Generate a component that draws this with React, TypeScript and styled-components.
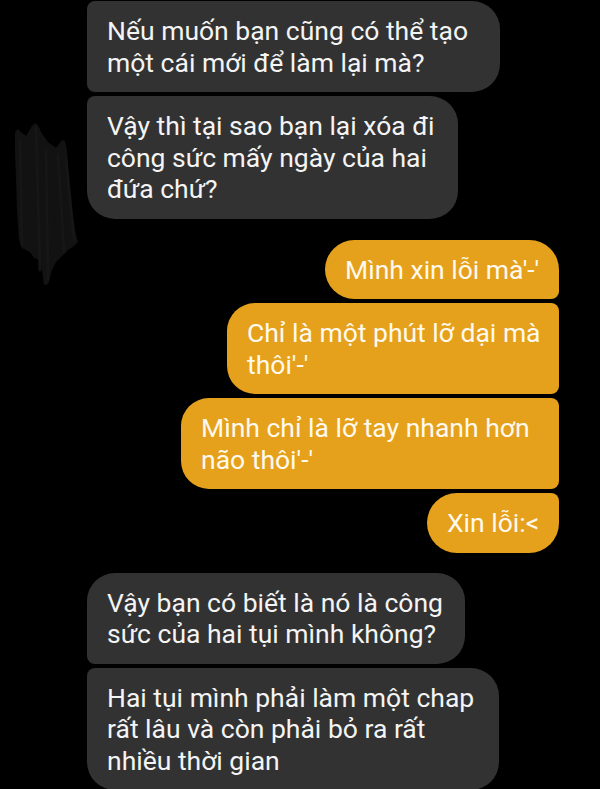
import React from "react";
import styled, { createGlobalStyle } from "styled-components";

const GlobalStyle = createGlobalStyle`
  html, body {
    margin: 0;
    padding: 0;
    background: #000;
  }
`;

const Screen = styled.div`
  width: 600px;
  height: 789px;
  overflow: hidden;
  background: #000;
  display: flex;
  flex-direction: column;
  padding-top: 1px;
  box-sizing: border-box;
  font-family: Roboto, "Noto Sans", "Liberation Sans", sans-serif;
  -webkit-font-smoothing: antialiased;
`;

const Group = styled.div<{ $gap: number }>`
  display: flex;
  flex-direction: row;
  align-items: flex-start;
  margin-top: ${(p) => p.$gap}px;
`;

const AvatarSlot = styled.div`
  width: 87px;
  height: 0;
  flex-shrink: 0;
  overflow: visible;
`;

const Scribble = styled.svg`
  display: block;
  margin-top: 119px;
  margin-left: 12px;
  overflow: visible;
`;

const Stack = styled.div<{ $side: "in" | "out" }>`
  flex: 1;
  display: flex;
  flex-direction: column;
  gap: 4px;
  align-items: ${(p) => (p.$side === "out" ? "flex-end" : "flex-start")};
  padding-right: ${(p) => (p.$side === "out" ? "41px" : "0")};
`;

const Bubble = styled.div<{ $side: "in" | "out"; $w: number; $r: string }>`
  box-sizing: border-box;
  width: ${(p) => p.$w}px;
  padding: 14px 20px;
  border-radius: ${(p) => p.$r};
  background: ${(p) => (p.$side === "out" ? "#e5a11b" : "#323232")};
  color: ${(p) => (p.$side === "out" ? "#fff9ee" : "#f4f4f4")};
  font-size: 26.5px;
  line-height: 31.5px;
  white-space: nowrap;
`;

type Msg = { lines: string[]; w: number; r: string };

const L = 28;
const S = 8;
const rad = (tl: number, tr: number, br: number, bl: number) =>
  `${tl}px ${tr}px ${br}px ${bl}px`;

const first: Msg[] = [
  { lines: ["Nếu muốn bạn cũng có thể tạo", "một cái mới để làm lại mà?"], w: 413, r: rad(S, L, L, S) },
  { lines: ["Vậy thì tại sao bạn lại xóa đi", "công sức mấy ngày của hai", "đứa chứ?"], w: 371, r: rad(S, L, L, L) },
];

const mine: Msg[] = [
  { lines: ["Mình xin lỗi mà'-'"], w: 234, r: rad(30, 30, S, 30) },
  { lines: ["Chỉ là một phút lỡ dại mà", "thôi'-'"], w: 332, r: rad(L, S, S, L) },
  { lines: ["Mình chỉ là lỡ tay nhanh hơn", "não thôi'-'"], w: 378, r: rad(L, S, S, L) },
  { lines: ["Xin lỗi:<"], w: 132, r: rad(30, S, 30, 30) },
];

const second: Msg[] = [
  { lines: ["Vậy bạn có biết là nó là công", "sức của hai tụi mình không?"], w: 378, r: rad(L, L, L, S) },
  { lines: ["Hai tụi mình phải làm một chap", "rất lâu và còn phải bỏ ra rất", "nhiều thời gian"], w: 412, r: rad(S, L, L, L) },
];

const renderBubbles = (list: Msg[], side: "in" | "out") =>
  list.map((m, i) => (
    <Bubble key={i} $side={side} $w={m.w} $r={m.r}>
      {m.lines.map((t, j) => (
        <React.Fragment key={j}>
          {j > 0 && <br />}
          {t}
        </React.Fragment>
      ))}
    </Bubble>
  ));

export default function App() {
  return (
    <>
      <GlobalStyle />
      <Screen>
        <Group $gap={0}>
          <AvatarSlot>
            <Scribble width="70" height="170" viewBox="0 0 70 170">
              <path
                d="M3,12 L6,9 L9,12 L14,16 L20,6 L23,3 L26,5 L29,12 L36,22 L44,28 L50,20 L53,21 L55,30 L57,60 L60,90 L64,115 L66,122 L62,126 L56,130 L50,136 L44,142 L40,150 L36,164 L32,165 L30,150 L28,140 L22,138 L18,132 L10,128 L7,120 L5,90 L4,60 L3,30 Z"
                fill="#121212"
              />
              <g stroke="#161616" strokeWidth="3" strokeLinecap="round" fill="none">
                <path d="M8,20 L10,125" />
                <path d="M24,8 L28,150" />
                <path d="M34,30 L36,160" />
                <path d="M46,35 L52,132" />
                <path d="M54,40 L62,120" />
              </g>
            </Scribble>
          </AvatarSlot>
          <Stack $side="in">{renderBubbles(first, "in")}</Stack>
        </Group>
        <Group $gap={21}>
          <Stack $side="out">{renderBubbles(mine, "out")}</Stack>
        </Group>
        <Group $gap={20}>
          <AvatarSlot />
          <Stack $side="in">{renderBubbles(second, "in")}</Stack>
        </Group>
      </Screen>
    </>
  );
}
